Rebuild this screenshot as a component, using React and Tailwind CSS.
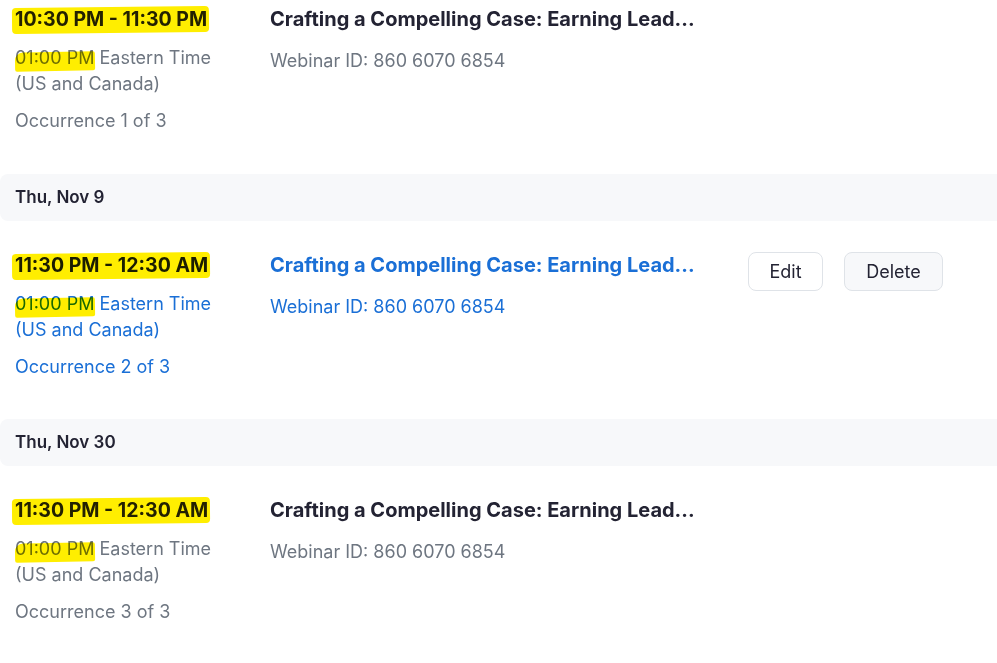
import React from 'react';

const rows = [
    { date: null, time: '10:30 PM - 11:30 PM', occ: 'Occurrence 1 of 3', active: false },
    { date: 'Thu, Nov 9', time: '11:30 PM - 12:30 AM', occ: 'Occurrence 2 of 3', active: true },
    { date: 'Thu, Nov 30', time: '11:30 PM - 12:30 AM', occ: 'Occurrence 3 of 3', active: false },
];

const Marker = ({ className }) => (
    <span className={`absolute bg-[#ffee00] mix-blend-multiply pointer-events-none ${className}`} />
);

const Row = ({ time, occ, active, first }) => {
    const sub = active ? 'text-[#1a6fd6]' : 'text-[#6e7681]';
    const head = active ? 'text-[#1a6fd6]' : 'text-[#232333]';
    return (
        <div className={`flex items-start ${first ? 'pt-[7px] pb-[40px]' : 'pt-[32px] pb-[39px]'}`}>
            {/* time column */}
            <div className="w-[270px] pl-[15px] shrink-0">
                <div className="relative inline-block">
                    <span className={`relative text-[19.5px] leading-[24px] font-bold ${active ? 'text-[#1b1f8f]' : 'text-[#232333]'}`}>{time}</span>
                    <Marker className="-left-[3px] -right-[2px] top-[0px] h-[26px] rounded-[4px] -rotate-[0.6deg]" />
                </div>
                <div className={`mt-[13px] text-[18px] leading-[26px] ${sub}`}>
                    <span className="relative">
                        01:00 PM
                        <Marker className="left-0 -right-[1px] top-[5px] h-[19px] rounded-tl-[8px] rounded-[2px] -rotate-[1deg]" />
                    </span>{' '}Eastern Time
                    <br />
                    (US and Canada)
                </div>
                <div className={`mt-[11px] text-[18px] leading-[26px] ${sub}`}>{occ}</div>
            </div>

            {/* title column */}
            <div className="w-[478px] shrink-0">
                <div className={`text-[20px] leading-[24px] font-bold whitespace-nowrap ${head}`}>Crafting a Compelling Case: Earning Lead...</div>
                <div className={`mt-[17px] text-[18px] leading-[26px] ${sub}`}>Webinar ID: 860 6070 6854</div>
            </div>

            {/* actions */}
            {active && (
                <div className="flex items-center gap-[21px] -mt-[1px]">
                    <button className="h-[39px] w-[75px] rounded-[8px] border border-[#dfe3e8] bg-white text-[18px] text-[#232333]">Edit</button>
                    <button className="h-[39px] w-[99px] rounded-[8px] border border-[#dfe3e8] bg-[#f7f8fa] text-[18px] text-[#232333]">Delete</button>
                </div>
            )}
        </div>
    );
};

export default function App() {
    return (
        <div className="min-h-screen w-[997px] bg-white font-['Inter',sans-serif] overflow-hidden">
            {rows.map((r, i) => (
                <div key={i}>
                    {r.date && (
                        <div className="h-[47px] flex items-center pl-[15px] bg-[#f7f8fa] rounded-l-[8px] -mr-[1px]">
                            <span className="text-[17px] font-semibold text-[#232333]">{r.date}</span>
                        </div>
                    )}
                    <Row {...r} first={i === 0} />
                </div>
            ))}
        </div>
    );
}
